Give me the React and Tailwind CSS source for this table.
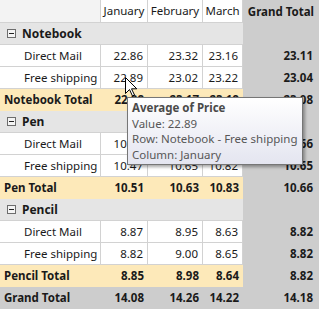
import React from "react";

const cols = "grid grid-cols-[101px_47px_55px_40px_76px]";

function Minus() {
  return (
    <span className="inline-flex w-[9px] h-[9px] border border-[#6d6d6d] items-center justify-center mr-[6px] bg-[#f4f4f4]">
      <span className="block w-[5px] h-px bg-[#222]" />
    </span>
  );
}

function GroupRow({ name }) {
  return (
    <div className={cols + " h-[22px]"}>
      <div className="col-span-4 bg-[#e5e5e5] border-b border-[#d2d2d2] flex items-center pl-[7px] font-bold text-[12px]">
        <Minus />
        {name}
      </div>
      <div className="bg-[#cdcdcd]" />
    </div>
  );
}

function DataRow({ label, v, gt }) {
  return (
    <div className={cols + " h-[22px]"}>
      <div className="bg-white border-r border-b border-[#d2d2d2] flex items-center pl-[24px]">{label}</div>
      {v.map((x, i) => (
        <div key={i} className="bg-white border-r border-b border-[#d2d2d2] flex items-center justify-end pr-[4px]">{x}</div>
      ))}
      <div className="bg-[#cdcdcd] flex items-center justify-end pr-[6px] font-bold">{gt}</div>
    </div>
  );
}

function TotalRow({ label, v, gt }) {
  return (
    <div className={cols + " h-[22px] font-bold"}>
      <div className="bg-[#fde9b9] flex items-center pl-[4px]">{label}</div>
      {v.map((x, i) => (
        <div key={i} className="bg-[#fde9b9] flex items-center justify-end pr-[4px]">{x}</div>
      ))}
      <div className="bg-[#cdcdcd] flex items-center justify-end pr-[6px]">{gt}</div>
    </div>
  );
}

export default function App() {
  return (
    <div className="relative w-[319px] h-[309px] overflow-hidden whitespace-nowrap bg-[#cdcdcd] text-[11.5px] text-[#1a1a1a] font-['Noto_Sans',sans-serif] leading-none">
      <div className={cols + " h-[23px]"}>
        <div className="bg-[#f3f3f3] border-r border-b border-[#d2d2d2]" />
        <div className="bg-white border-r border-b border-[#d2d2d2] flex items-center justify-center">January</div>
        <div className="bg-white border-r border-b border-[#d2d2d2] flex items-center justify-center">February</div>
        <div className="bg-white border-r border-b border-[#d2d2d2] flex items-center justify-center">March</div>
        <div className="bg-[#cdcdcd] flex items-center justify-end pr-[5px] font-bold">Grand Total</div>
      </div>
      <GroupRow name="Notebook" />
      <DataRow label="Direct Mail" v={["22.86", "23.32", "23.16"]} gt="23.11" />
      <DataRow label="Free shipping" v={["22.89", "23.02", "23.22"]} gt="23.04" />
      <TotalRow label="Notebook Total" v={["22.88", "23.17", "23.19"]} gt="23.08" />
      <GroupRow name="Pen" />
      <DataRow label="Direct Mail" v={["10.55", "10.61", "10.84"]} gt="10.66" />
      <DataRow label="Free shipping" v={["10.47", "10.65", "10.82"]} gt="10.65" />
      <TotalRow label="Pen Total" v={["10.51", "10.63", "10.83"]} gt="10.66" />
      <GroupRow name="Pencil" />
      <DataRow label="Direct Mail" v={["8.87", "8.95", "8.63"]} gt="8.82" />
      <DataRow label="Free shipping" v={["8.82", "9.00", "8.65"]} gt="8.82" />
      <TotalRow label="Pencil Total" v={["8.85", "8.98", "8.64"]} gt="8.82" />
      <div className={cols + " h-[22px] font-bold bg-[#cdcdcd]"}>
        <div className="flex items-center pl-[4px]">Grand Total</div>
        <div className="flex items-center justify-end pr-[4px]">14.08</div>
        <div className="flex items-center justify-end pr-[4px]">14.26</div>
        <div className="flex items-center justify-end pr-[4px]">14.22</div>
        <div className="flex items-center justify-end pr-[6px]">14.18</div>
      </div>

      <div className="absolute left-[127px] top-[97px] w-[176px] h-[68px] border border-[#767676] bg-gradient-to-b from-white to-[#e4e5f0] shadow-[2px_2px_3px_rgba(0,0,0,0.35)] pl-[4px] pt-[4px] text-[#575757] flex flex-col gap-[4px]">
        <div className="font-bold text-[#4a4a4a]">Average of Price</div>
        <div>Value: 22.89</div>
        <div>Row: Notebook - Free shipping</div>
        <div>Column: January</div>
      </div>

      <svg className="absolute left-[125px] top-[77px]" width="13" height="20" viewBox="0 0 13 20">
        <path d="M0.5 0.5 L0.5 16.5 L4.5 12.5 L7.5 19 L9.5 18 L6.5 11.8 L11.8 11.8 Z" fill="white" stroke="black" strokeWidth="1" strokeLinejoin="miter" />
      </svg>
    </div>
  );
}
